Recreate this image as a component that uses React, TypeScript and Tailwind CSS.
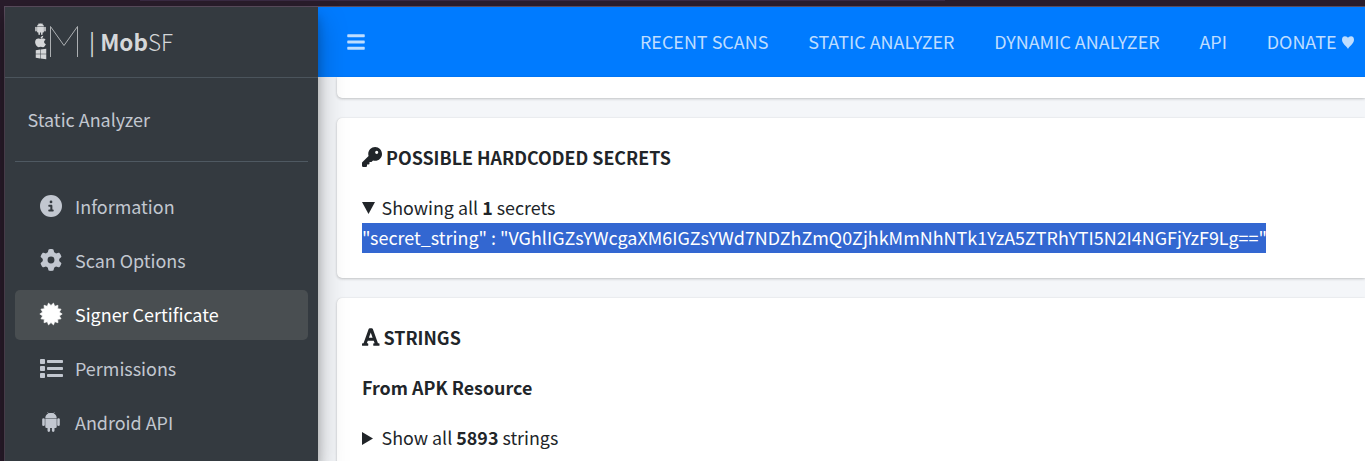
import React from "react";
import { FaCircleInfo, FaGear, FaKey } from "react-icons/fa6";
import { FaApple, FaBars, FaFont, FaWindows } from "react-icons/fa";

const menu = [
  { label: "Information", icon: <FaCircleInfo size={22} /> },
  { label: "Scan Options", icon: <FaGear size={22} /> },
  { label: "Signer Certificate", icon: <Certificate />, active: true },
  { label: "Permissions", icon: <ListIcon /> },
  { label: "Android API", icon: <Android className="h-[20px] w-[18px]" /> },
];

const links = ["RECENT SCANS", "STATIC ANALYZER", "DYNAMIC ANALYZER", "API"];

function Certificate() {
  const points = Array.from({ length: 28 }, (_, i) => {
    const r = i % 2 === 0 ? 11.2 : 8.6;
    const a = (Math.PI * i) / 14;
    return `${(12 + r * Math.cos(a)).toFixed(2)},${(12 + r * Math.sin(a)).toFixed(2)}`;
  }).join(" ");
  return (
    <svg width="24" height="24" viewBox="0 0 24 24" fill="currentColor" stroke="currentColor" strokeWidth="0.600" strokeLinejoin="round">
      <polygon points={points} />
    </svg>
  );
}

function ListIcon() {
  return (
    <svg width="23" height="19" viewBox="0 0 23 19" fill="currentColor">
      {[0, 7, 14].map((y) => (
        <g key={y}>
          <rect x="0" y={y} width="5" height="5" rx="0.800" />
          <rect x="7" y={y + 1} width="16" height="3" rx="0.800" />
        </g>
      ))}
    </svg>
  );
}

function Android({ className }: { className: string }) {
  return (
    <svg viewBox="0 0 18 20" className={className} fill="currentColor">
      <path d="M3.300 6C3.300 3.900 4.500 2.400 6.200 1.500L5.300 .2L5.600 0L6.600 1.300C8.100 .8 9.900 .8 11.400 1.300L12.400 0L12.700 .2L11.800 1.500C13.500 2.400 14.700 3.900 14.700 6Z" />
      <path d="M3.300 6.600H14.700V14.700Q14.700 16 13.400 16H12.500V18.600A1.300 1.300 0 0 1 9.900 18.600V16H8.100V18.600A1.300 1.300 0 0 1 5.500 18.600V16H4.600Q3.300 16 3.300 14.700Z" />
      <rect x="0.200" y="6.300" width="2.600" height="7.800" rx="1.300" />
      <rect x="15.200" y="6.300" width="2.600" height="7.800" rx="1.300" />
    </svg>
  );
}

function Logo() {
  return (
    <div className="flex h-[38px] items-center text-[#d5d7d9]">
      <div className="flex w-[11px] flex-col items-center">
        <Android className="h-[12px] w-[11px] shrink-0" />
        <FaApple className="h-[13px] w-[11px] shrink-0" preserveAspectRatio="none" />
        <FaWindows size={12} className="shrink-0" />
      </div>
      <svg width="30" height="34" viewBox="0 0 30 34" fill="none" stroke="currentColor" className="ml-[3px] opacity-75">
        <path d="M1.500 33V2.500L15 21.500L28.500 2.500V33" strokeWidth="1" />
      </svg>
    </div>
  );
}

export default function App() {
  return (
    <div className="flex h-[461px] w-[1365px] flex-col overflow-hidden bg-[#291c2b] font-['Noto_Sans_CJK_SC','Noto_Sans',sans-serif] text-[17.95px] leading-[28px] text-[#212529]">
      <div className="h-[6px] shrink-0">
        <div className="ml-[140px] h-px w-[805px] bg-[#3a2a43]" />
      </div>
      <div className="ml-[4px] flex min-h-0 grow border-t border-l border-[#5a4c5d]">
        <aside className="z-10 w-[313px] shrink-0 bg-[#343a40] text-[#c2c7d0] shadow-[0_14px_28px_rgba(0,0,0,0.25),0_10px_10px_rgba(0,0,0,0.22)]">
          <div className="flex h-[71px] items-center border-b border-[#4b545c] pb-[2px] pl-[30px]">
            <Logo />
            <span className="ml-[10px] text-[22.500px] text-[#d5d7d9]">
              | <b>Mob</b><span className="font-light">SF</span>
            </span>
          </div>
          <div className="mx-[10px] flex h-[84px] items-center border-b border-[#4f5962] pb-[2px] pl-[12.500px]">Static Analyzer</div>
          <nav className="mt-[20px] flex flex-col gap-[4px] px-[10px]">
            {menu.map((m) => (
              <div key={m.label} className={m.active ? "flex h-[50px] items-center rounded-[5px] bg-[#494e51] pb-[2px] pl-[20px] text-white" : "flex h-[50px] items-center rounded-[5px] pb-[2px] pl-[20px]"}>
                <span className="mr-[8px] flex w-[32px] justify-center">{m.icon}</span>
                {m.label}
              </div>
            ))}
          </nav>
        </aside>
        <main className="flex min-w-0 grow flex-col bg-[#f4f6f9]">
          <header className="flex h-[70px] shrink-0 items-center bg-[#007bff] pr-[11.500px] pb-[2px] pl-[28px] text-white/75">
            <FaBars size={20} className="mt-[1px]" />
            <div className="ml-auto flex gap-[39.800px]">
              {links.map((l) => <span key={l}>{l}</span>)}
              <span className="flex items-center">
                DONATE
                <svg width="12" height="13" viewBox="0 0 13 13" preserveAspectRatio="none" fill="currentColor" className="mt-[2px] ml-[5px]">
                  <path d="M6.500 13C5.500 10.500 0 7.800 0 3.800C0 1.400 1.400 .3 3.200 .3C4.900 .3 6.100 1 6.500 2C6.900 1 8.100 .3 9.800 .3C11.600 .3 13 1.400 13 3.800C13 7.800 7.500 10.500 6.500 13Z" />
                </svg>
              </span>
            </div>
          </header>
          <div className="flex flex-col gap-[20px] pl-[19px]">
            <section className="h-[21px] rounded-bl-[5px] bg-white shadow-[0_0_1px_rgba(0,0,0,0.13),0_1px_3px_rgba(0,0,0,0.2)]" />
            <section className="h-[160px] rounded-l-[5px] bg-white pt-[25px] pl-[25px] shadow-[0_0_1px_rgba(0,0,0,0.13),0_1px_3px_rgba(0,0,0,0.2)]">
              <div className="flex h-[30px] items-center gap-[4px] pb-[2px] text-[17.87px] font-bold"><FaKey size={20} />POSSIBLE HARDCODED SECRETS</div>
              <div className="mt-[20px] flex h-[30px] items-center pb-[2px]">
                <svg width="13" height="12" viewBox="0 0 13 12" className="mt-[2px] mr-[6.500px]" fill="currentColor"><path d="M0 0H13L6.500 12Z" /></svg>
                <span className="text-[17.87px]">Showing all <b>1</b> secrets</span>
              </div>
              <div className="h-[30px] w-[904px] bg-[#3367d1] text-[17.93px] whitespace-nowrap text-white">"secret_string" : "VGhlIGZsYWcgaXM6IGZsYWd7NDZhZmQ0ZjhkMmNhNTk1YzA5ZTRhYTI5N2I4NGFjYzF9Lg=="</div>
            </section>
            <section className="h-[200px] rounded-tl-[5px] bg-white pt-[25px] pl-[25px] shadow-[0_0_1px_rgba(0,0,0,0.13),0_1px_3px_rgba(0,0,0,0.2)]">
              <div className="flex h-[30px] items-center gap-[4px] pb-[2px] text-[17.87px] font-bold"><FaFont size={20} className="w-[17.500px]" />STRINGS</div>
              <div className="mt-[20px] h-[30px] text-[17.87px] font-bold">From APK Resource</div>
              <div className="mt-[20px] flex h-[30px] items-center pb-[2px]">
                <svg width="11" height="13" viewBox="0 0 11 13" className="mt-[2px] mr-[8.500px]" fill="currentColor"><path d="M0 0V13L11 6.500Z" /></svg>
                <span className="text-[17.87px]">Show all <b>5893</b> strings</span>
              </div>
            </section>
          </div>
        </main>
      </div>
    </div>
  );
}
